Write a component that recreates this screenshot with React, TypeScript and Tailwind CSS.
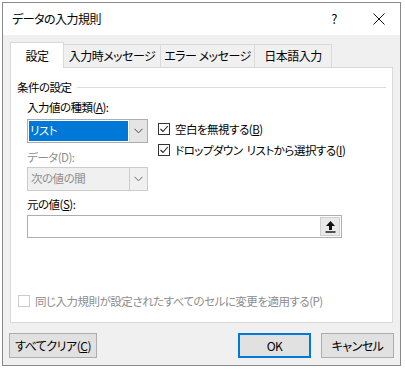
import type { ReactNode } from 'react'

const font = "font-['Meiryo_UI','Noto_Sans_CJK_JP',sans-serif] [font-feature-settings:'palt']"

function Chevron({ color = '#444' }: { color?: string }) {
  return (
    <svg width="9" height="6" viewBox="0 0 9 6">
      <path d="M0.5 0.8 L4.5 4.8 L8.5 0.8" fill="none" stroke={color} strokeWidth="1" />
    </svg>
  )
}

function Check({ checked, disabled }: { checked?: boolean; disabled?: boolean }) {
  return (
    <span
      className={`flex h-[12px] w-[12px] shrink-0 items-center justify-center border bg-white ${
        disabled ? 'border-[#cccccc]' : 'border-[#333333]'
      }`}
    >
      {checked && (
        <svg width="10" height="10" viewBox="0 0 10 10">
          <path d="M1.5 5 L4 7.5 L8.8 2" fill="none" stroke="#222" strokeWidth="1.1" />
        </svg>
      )}
    </span>
  )
}

function Tab({ children, active }: { children: ReactNode; active?: boolean }) {
  if (active) {
    return (
      <div className="relative z-10 -mb-px flex h-[26px] w-[54px] items-center justify-center border border-b-0 border-[#d9d9d9] bg-white">
        {children}
      </div>
    )
  }
  return (
    <div className="flex h-[23px] items-center justify-center whitespace-nowrap border border-l-0 border-b-0 border-[#d9d9d9] bg-[#f0f0f0]">
      {children}
    </div>
  )
}

export default function App() {
  return (
    <div className={`h-[370px] w-[405px] bg-white pl-[2px] pt-[2px] text-[11.5px] tracking-[-0.5px] text-black ${font}`}>
      <div className="flex h-[364px] w-[399px] flex-col border border-[#8a8a8a] bg-[#f0f0f0]">
        {/* title bar */}
        <div className="flex h-[32px] items-center bg-white pl-[9px]">
          <span className="text-[12px]">データの入力規則</span>
          <span className="ml-auto mr-[36px] text-[13px]">?</span>
          <svg className="mr-[15px]" width="12" height="12" viewBox="0 0 12 12">
            <path d="M0.5 0.5 L11.5 11.5 M11.5 0.5 L0.5 11.5" stroke="#111" strokeWidth="1" />
          </svg>
        </div>

        {/* tabs */}
        <div className="mt-[7px] flex items-end pl-[7px] text-[12px]">
          <Tab active>設定</Tab>
          <div className="flex">
            <div className="w-[97px]">
              <Tab>入力時メッセージ</Tab>
            </div>
            <div className="w-[94px]">
              <Tab>エラー メッセージ</Tab>
            </div>
            <div className="w-[77px]">
              <Tab>日本語入力</Tab>
            </div>
          </div>
        </div>

        {/* panel */}
        <div className="ml-[7px] flex h-[256px] w-[383px] flex-col border border-[#d9d9d9] bg-white pl-[6px]">
          <div className="mt-[9px] flex items-center leading-[20px]">
            <span>条件の設定</span>
            <div className="ml-[5px] mr-[6px] h-px flex-1 bg-[#dcdcdc]" />
          </div>

          <div className="flex">
            <div className="ml-[10px] flex w-[121px] flex-col">
              <span className="leading-[20px]">
                入力値の種類(<u>A</u>):
              </span>
              <div className="mt-[2px] flex h-[24px] border border-[#adadad] bg-white">
                <div className="m-[1px] flex flex-1 items-center bg-[#0078d7] pl-[1px] text-white">リスト</div>
                <div className="flex w-[18px] items-center justify-center border-l border-[#d9d9d9] bg-[#e5e5e5]">
                  <Chevron />
                </div>
              </div>
              <span className="mt-[4px] leading-[20px] text-[#8d8d8d]">データ(D):</span>
              <div className="flex h-[24px] border border-[#cccccc] bg-[#f0f0f0]">
                <div className="flex flex-1 items-center pl-[3px] text-[#8d8d8d]">次の値の間</div>
                <div className="flex w-[18px] items-center justify-center border-l border-[#cccccc]">
                  <Chevron color="#666" />
                </div>
              </div>
            </div>

            <div className="ml-[10px] mt-[26px] flex flex-col gap-[9px]">
              <div className="flex items-center gap-[5px] leading-[12px]">
                <Check checked />
                <span>
                  空白を無視する(<u>B</u>)
                </span>
              </div>
              <div className="flex items-center gap-[5px] leading-[12px]">
                <Check checked />
                <span>
                  ドロップダウン&nbsp; リストから選択する(<u>I</u>)
                </span>
              </div>
            </div>
          </div>

          <span className="ml-[10px] mt-[3px] leading-[20px]">
            元の値(<u>S</u>):
          </span>
          <div className="ml-[10px] mt-[1px] flex h-[23px] w-[315px] border border-[#adadad] bg-white">
            <div className="flex-1" />
            <div className="m-[1px] flex w-[20px] items-center justify-center border border-[#cfcfcf] bg-[#e9e9e9]">
              <svg width="11" height="13" viewBox="0 0 11 13">
                <path d="M5.5 1 L10 6 H7 V10 H4 V6 H1 Z" fill="#111" />
                <rect x="0.5" y="11.3" width="10" height="1.4" fill="#111" />
              </svg>
            </div>
          </div>

          <div className="mt-auto mb-[12px] ml-[1px] flex items-center gap-[5px]">
            <Check disabled />
            <span className="text-[#8d8d8d]">同じ入力規則が設定されたすべてのセルに変更を適用する(P)</span>
          </div>
        </div>

        {/* buttons */}
        <div className="mt-[10px] flex px-[6px] text-[12px]">
          <button
            type="button"
            className="flex h-[25px] w-[88px] items-center justify-center border border-[#adadad] bg-[#e1e1e1]"
          >
            すべてクリア(<u>C</u>)
          </button>
          <button
            type="button"
            className="ml-auto flex h-[25px] w-[73px] items-center justify-center border-2 border-[#0078d7] bg-[#e1e1e1]"
          >
            OK
          </button>
          <button
            type="button"
            className="ml-[10px] flex h-[25px] w-[73px] items-center justify-center border border-[#adadad] bg-[#e1e1e1]"
          >
            キャンセル
          </button>
        </div>
      </div>
    </div>
  )
}
